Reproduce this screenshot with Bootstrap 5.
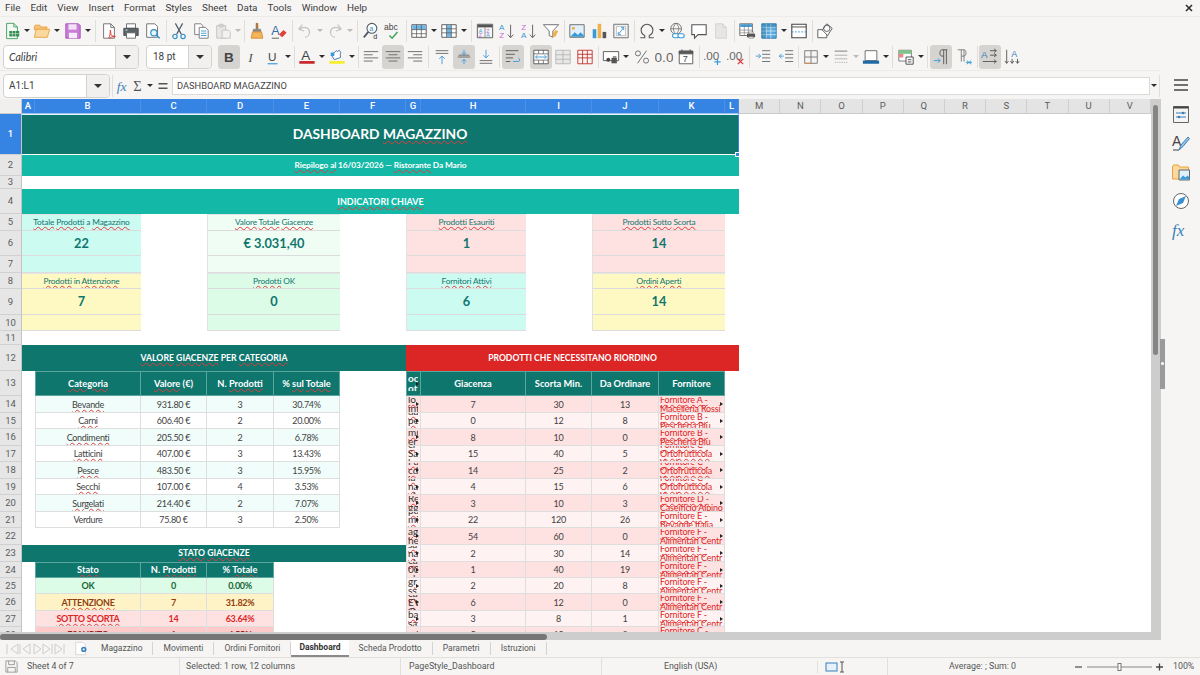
<!DOCTYPE html>
<html lang="en">
<head>
<meta charset="utf-8">
<title>Dashboard Magazzino</title>
<link href="https://cdn.jsdelivr.net/npm/bootstrap@5.3.0/dist/css/bootstrap.min.css" rel="stylesheet">
<style>
html,body{height:100%;overflow:hidden;margin:0}
body{background:#f6f5f4;font-family:"Roboto","Liberation Sans",sans-serif;font-size:10px;color:#3d3d3d}
.lo-app{width:1200px;height:675px}
.lo-menu{height:17px;padding-left:5px;gap:10px;font-size:9.9px;line-height:16px;color:#3d3d3d;border-bottom:1px solid #ecebe9}
.lo-close{margin-left:auto;margin-right:7px;display:flex;align-items:center}
.lo-tool{height:26px}
.lo-t1{padding-left:1px;margin-top:1px}
.lo-t2{padding-left:3px;height:27px}
.tb{width:22px;height:24px;display:flex;align-items:center;justify-content:center;flex:none;border-radius:3px}
.tb svg{width:18px;height:18px;display:block}
.tb.on{background:#d6d4d1}
.tb-fx{width:18px}.tb-sg{width:13px}
.cr{width:8px;height:24px;display:flex;align-items:center;justify-content:center;flex:none}
.cr::before{content:"";border-left:3px solid transparent;border-right:3px solid transparent;border-top:3px solid #2e2e2e}
.cr.dim::before{border-top-color:#b9b9b9}
.sp4,.sp5,.sp6,.sp3{flex:none;height:22px;position:relative}
.sp3{width:3px}.sp4{width:4px}.sp5{width:5px}.sp6{width:6px}
.sp3::after,.sp4::after,.sp5::after,.sp6::after{content:"";display:block;width:1px;height:22px;background:#e0dedb;margin:0 auto}
.g1{margin-left:1px}.g6{margin-left:6px}
.combo{height:24px;background:#fff;border:1px solid #d4d2cf;border-radius:4px;display:flex;align-items:stretch;flex:none;font-size:10px}
.combo>span{flex:1;padding-left:5px;line-height:22px;white-space:nowrap}
.combo>i{display:flex;width:23px;flex:none;align-items:center;justify-content:center;background:#f1f0ee;border-left:1px solid #d4d2cf;border-radius:0 4px 4px 0}
.combo>i::before{content:"";border-left:4px solid transparent;border-right:4px solid transparent;border-top:4px solid #333}
.cb-font{width:136px}.cb-font>span{font-family:"Lato",sans-serif;font-style:italic;font-size:10.5px}
.cb-size{width:66px;margin-left:7px;margin-right:6px}.cb-size>span{padding-left:6px}
.cb-name{width:107px}
.lo-fx{height:29px;padding:1px 0 0 3px;border-top:1px solid #ecebe9}
.fx-in{flex:1;height:18px;background:#fff;border:1px solid #dcdad7;font-size:9.3px;line-height:16px;padding-left:4px;color:#444;white-space:nowrap}
.sheet-wrap{height:533px}
.sheet-port{width:1151px;height:533px;overflow:hidden;background:#fff;flex:none}
.grid-t{width:1151px;table-layout:fixed;border-collapse:separate;border-spacing:0;font-family:"Lato","Liberation Sans",sans-serif;font-size:9px;letter-spacing:-.3px;color:#3f3f3f}
.grid-t td,.grid-t th{padding:0;overflow:hidden;text-align:center;white-space:nowrap;line-height:1}
.cw-rh{width:22px}.cw-a{width:13px}.cw-b{width:106px}.cw-c{width:66px}.cw-d{width:67px}.cw-e{width:66px}.cw-f{width:66px}.cw-g{width:15px}.cw-h{width:105px}.cw-i{width:66px}.cw-j{width:67px}.cw-k{width:66px}.cw-l{width:14px}.cw-x{width:41.2px}
.grid-t thead th{height:15px;background:#e4e4e4;color:#5c5c5c;font-family:"Roboto",sans-serif;font-size:9.5px;letter-spacing:0;font-weight:400;border-right:1px solid #cfcfcf;border-bottom:1px solid #c9c9c9}
.grid-t thead th.sel{background:#3584e4;color:#fff;font-weight:500;border-right-color:#4b90e4;border-bottom-color:#9cc2ef}
.grid-t thead th.corner{background:#f0efed;border-right-color:#c9c9c9}
.grid-t tbody th{background:#e6e6e6;color:#5c5c5c;font-family:"Roboto",sans-serif;font-size:9.5px;letter-spacing:0;font-weight:400;border-right:1px solid #c4c4c4;border-bottom:1px solid #d1d1d1}
.grid-t tbody th.sel{background:#3584e4;color:#fff;font-weight:500}
.h13{height:13px}.h14{height:14px}.h16{height:16px}.h17{height:17px}.h21{height:21px}.h25{height:25px}.h26{height:26px}.h41{height:41px}
.sq{text-decoration:underline wavy #df3b3b .8px;text-underline-offset:.5px}
.bt1{background:#0f766e;color:#fff;font-size:13.8px;letter-spacing:0;font-weight:700;position:relative;padding-bottom:2px!important;border-top:1px solid #e8f4ff;border-right:1px solid #3584e4;border-bottom:1.5px solid #fff;overflow:visible!important}
.handle{position:absolute;right:-2px;bottom:-3px;width:5px;height:5px;background:#3584e4;border:1px solid #fff}
.bt2{background:#14b8a6;color:#fff;font-weight:700;font-size:8.3px;letter-spacing:-.1px}
.bt4{background:#14b8a6;color:#fff;font-weight:700;font-size:9px;letter-spacing:0}
.bd{background:#0f766e;color:#fff;font-weight:700;font-size:8.7px;letter-spacing:0}
.br{background:#dc2626;color:#fff;font-weight:700;font-size:8.6px;letter-spacing:0}
.kl{color:#0f766e;font-size:8.3px;letter-spacing:-.18px;border-bottom:1px solid #dcdcdc;border-top:1px solid #e4e4e4}
.kv{color:#0f766e;font-size:12.8px;letter-spacing:0;font-weight:700;border-bottom:1px solid #dcdcdc}
.ke{border-bottom:1px solid #dcdcdc}
.kbl{border-left:1px solid #e2e2e2}
.kteal{background:#ccfbf1}.kgrn{background:#f0fdf4}.kred{background:#fee2e2}.kyel{background:#fef9c3}.kok{background:#dcfce7}
.th-t{background:#0f766e;color:#fff;font-weight:700;font-size:9.3px;letter-spacing:0;border-right:1px solid #5ba69f;border-bottom:1px solid #5ba69f;border-top:1px solid #5ba69f}
.th-l{border-left:1px solid #5ba69f}
.dc{border-right:1px solid #dedede;border-bottom:1px solid #dedede}
.dl{border-left:1px solid #dedede}
.ra{background:#f0fdfa}.rw{background:#fff}
.rr{background:#fee2e2}.rp{background:#fef2f2}
.st-ok{background:#dcfce7;color:#166534;font-weight:700}
.st-at{background:#fef3c7;color:#92400e;font-weight:700}
.st-so{background:#fee2e2;color:#dc2626;font-weight:700}
.st-es{background:#fecaca;color:#991b1b;font-weight:700}
.clipc{height:15px;overflow:hidden;display:flex;flex-direction:column;justify-content:center;text-align:left;line-height:9px;position:relative}
.clipc>span{display:block;white-space:nowrap}
.gc{font-size:10px;letter-spacing:0;color:#333;padding-left:1px;width:11px}
.th-gc{color:#fff;font-size:10px;text-align:left;padding-left:1px;width:11px;line-height:9.500px}
.kc{color:#dc2626;font-size:8.9px;letter-spacing:-.12px;padding-left:1px;padding-right:3px}
.ov{position:relative}
.ov::after{content:"";position:absolute;right:1px;top:50%;margin-top:-2px;border-top:2px solid transparent;border-bottom:2px solid transparent;border-left:3px solid #222}
.vbar{width:10px;flex:none;background:#cdcdcd}
.vthumb{margin:6px 0 0 2px;width:5px;height:250px;background:#858585;border-radius:3px}
.hbar{height:8px;background:#cdcdcd;width:1161px}
.hthumb{width:547px;height:6px;background:#767676;border-radius:3px;margin-top:2px}
.tabs{height:17px;font-size:8.5px;color:#555;width:1161px}
.tab-nav{width:72px;padding-left:6px}
.tab-nav svg{width:60px;height:14px;display:block}
.tab-new{width:19px;padding-left:2px}
.tab-i{padding:0 10px;border-right:1px solid #d5d3d0;height:13px;display:flex;align-items:center;white-space:nowrap}
.tab-i.act{background:#fff;color:#333;font-weight:700;height:17px;border-right:0;border-bottom:2px solid #8a8a8a;padding:0 8px}
.lo-side{width:39px;flex:none;padding-top:4px;gap:7px;align-items:center;position:relative}
.lo-side svg{width:20px;height:22px;display:block}
.grip{position:absolute;left:-1px;top:269px;width:5px;height:50px;background:#9a9a9a}
.grip::after{content:"";position:absolute;left:1px;top:23px;width:3px;height:3px;background:#fff;border-radius:50%}
.lo-status{height:18px;font-size:8.8px;color:#555;border-top:1px solid #e2e0dd}
.s-doc{width:27px;padding-left:4px}
.s-sheet{width:152px}
.s-sel{width:221px;padding-left:6px;border-left:1px solid #e2e0dd}
.s-pg{width:201px;padding-left:8px;border-left:1px solid #e2e0dd}
.s-lang{width:216px;padding-left:62px;border-left:1px solid #e2e0dd}
.s-mode{width:70px;padding-left:7px;border-left:1px solid #e2e0dd}
.s-sum{width:184px;padding-left:61px;border-left:1px solid #e2e0dd}
.zm{width:102px}
.zm svg{display:block}
.s-txt{line-height:17px;white-space:nowrap}
</style>
</head>
<body>
<div class="lo-app d-flex flex-column">

<div class="lo-menu d-flex">
<span>File</span><span>Edit</span><span>View</span><span>Insert</span><span>Format</span><span>Styles</span><span>Sheet</span><span>Data</span><span>Tools</span><span>Window</span><span>Help</span>
<span class="lo-close"><svg viewBox="0 0 8 8" width="8" height="8" fill="none" stroke="#2e2e2e" stroke-width="1.600"><path d="M1 1l6 6M7 1L1 7"/></svg></span>
</div>

<div class="lo-tool lo-t1 d-flex align-items-center">
<span class="tb"><svg viewBox="0 0 20 20"><path d="M4 1.500h8l4 4v13H4z" fill="#f2faf4" stroke="#3f9c5e"/><path d="M12 1.500v4h4" fill="none" stroke="#3f9c5e"/><path d="M7 10h11v6H7z" fill="#2f8c4e"/><path d="M10.500 10v6M14 10v6M7 13h11" stroke="#d5efdc" stroke-width=".7"/></svg></span><span class="cr"></span>
<span class="tb"><svg viewBox="0 0 20 20"><path d="M1.500 5.500l1-2h5l1 2h7v3H1.500z" fill="#f4c27a" stroke="#e8a33d"/><path d="M1.500 17l2-9h15l-2.500 9z" fill="#fbd89d" stroke="#e8a33d"/></svg></span><span class="cr"></span>
<span class="tb g1"><svg viewBox="0 0 20 20"><path d="M2 2h14l2 2v14H2z" fill="#c97fd6" stroke="#a450b5"/><path d="M5 2.500h9v6H5z" fill="#f4e3f7"/><path d="M5.500 12h9v6h-9z" fill="#f7ecf9"/></svg></span><span class="cr"></span>
<span class="sp6"></span>
<span class="tb"><svg viewBox="0 0 20 20"><path d="M4 2h8l4 4v12H4z" fill="#fff" stroke="#6a6a6a"/><path d="M12 2v4h4" fill="none" stroke="#6a6a6a"/><path d="M10 17c2-3 1-8 1.500-8s0 5 1.500 6 3 .5 4 1-4 0-5 1-2 2-2 0z" fill="none" stroke="#d9302f"/></svg></span>
<span class="tb"><svg viewBox="0 0 20 20"><path d="M5 2h10v5H5z" fill="#fff" stroke="#666"/><path d="M2 7h16v8H2z" fill="#5b6366" stroke="#4a5053"/><path d="M5 12h10v6H5z" fill="#fff" stroke="#666"/><path d="M4 9h2" stroke="#fff"/></svg></span>
<span class="tb"><svg viewBox="0 0 20 20"><path d="M3 2h9l3 3v12H3z" fill="#fff" stroke="#6a6a6a"/><circle cx="11" cy="12" r="3.500" fill="#e8f4fb" stroke="#2f8fc4" stroke-width="1.300"/><path d="M13.500 14.500l4 3.500" stroke="#2f8fc4" stroke-width="1.600"/></svg></span>
<span class="sp4"></span>
<span class="tb"><svg viewBox="0 0 20 20"><path d="M6 1.500l6.500 12M14 1.500L7.500 13.500" stroke="#4d5a66" stroke-width="1.300" fill="none"/><circle cx="5.500" cy="16" r="2.400" fill="none" stroke="#2f8fc4" stroke-width="1.300"/><circle cx="14.500" cy="16" r="2.400" fill="none" stroke="#2f8fc4" stroke-width="1.300"/></svg></span>
<span class="tb"><svg viewBox="0 0 20 20"><path d="M3 2h7l2 2v10H3z" fill="#fff" stroke="#777"/><path d="M8 6h7l3 3v9H8z" fill="#fff" stroke="#777"/><path d="M10 10h6M10 12.500h6M10 15h6" stroke="#3a9ad9"/></svg></span>
<span class="tb"><svg viewBox="0 0 20 20" opacity=".55"><path d="M3 4h10v14H3z" fill="#ddd" stroke="#999"/><path d="M6 2.500h4v3H6z" fill="#bbb" stroke="#999"/><path d="M9 9h7l2 2v7H9z" fill="#eee" stroke="#999"/></svg></span><span class="cr dim"></span>
<span class="sp4"></span>
<span class="tb"><svg viewBox="0 0 20 20"><path d="M9 1.500h2v6H9z" fill="#b07a3c" stroke="#8f5f28" stroke-width=".6"/><path d="M6 8h8l.5 2.500h-9z" fill="#888" stroke="#666" stroke-width=".5"/><path d="M5 11h10l1.500 7h-13z" fill="#f3b45c" stroke="#d38c2d"/></svg></span>
<span class="tb"><svg viewBox="0 0 20 20"><text x="1.500" y="14" font-family="Liberation Sans" font-size="14" fill="#3a6ea5">A</text><path d="M10 14l5-5 3.500 3-5 5z" fill="#e0403a"/><path d="M2 18h8" stroke="#555" stroke-width="1"/></svg></span>
<span class="sp4"></span>
<span class="tb"><svg viewBox="0 0 20 20" fill="none" stroke="#c4c4c4" stroke-width="1.400"><path d="M3 8l4-5M3 8l6 2"/><path d="M3.500 8c4-3 11-3 11.500 3 .3 3-2 5.500-5 6"/></svg></span><span class="cr dim"></span>
<span class="tb"><svg viewBox="0 0 20 20" fill="none" stroke="#c4c4c4" stroke-width="1.400"><path d="M17 8l-4-5M17 8l-6 2"/><path d="M16.500 8c-4-3-11-3-11.500 3-.3 3 2 5.500 5 6"/></svg></span><span class="cr dim"></span>
<span class="sp6"></span>
<span class="tb"><svg viewBox="0 0 20 20"><circle cx="11" cy="7" r="5.500" fill="#fff" stroke="#4d5a66" stroke-width="1.200"/><text x="8.300" y="9.500" font-family="Liberation Sans" font-size="7.500" fill="#2f8fc4">a</text><path d="M7 11l-5 6" stroke="#4d5a66" stroke-width="2"/><text x="12.500" y="18.500" font-family="Liberation Sans" font-size="8" fill="#333">d</text></svg></span>
<span class="tb"><svg viewBox="0 0 20 20"><text x="0" y="9" font-family="Liberation Sans" font-size="9.500" fill="#444">abc</text><path d="M6 15l3 3 6-7" fill="none" stroke="#3fa55b" stroke-width="1.700"/></svg></span>
<span class="sp4"></span>
<span class="tb"><svg viewBox="0 0 20 20"><path d="M2 3h16v14H2z" fill="#fff" stroke="#555"/><path d="M2.500 3.500h15v5h-15z" fill="#6fb6e6"/><path d="M2 8.500h16M2 13h16M7.300 3v14M12.600 3v14" stroke="#555" stroke-width=".8"/></svg></span><span class="cr"></span>
<span class="tb"><svg viewBox="0 0 20 20"><path d="M2 3h16v14H2z" fill="#fff" stroke="#555"/><path d="M7.300 3.500h5.300v13H7.300z" fill="#6fb6e6"/><path d="M2 7.500h16M2 12h16M7.300 3v14M12.600 3v14" stroke="#555" stroke-width=".8"/></svg></span><span class="cr"></span>
<span class="sp6"></span>
<span class="tb"><svg viewBox="0 0 20 20"><path d="M1.500 2.500h17v15h-17z" fill="#f5f5f5" stroke="#555"/><path d="M2 3h16v3H2z" fill="#555"/><path d="M10 6v11" stroke="#555" stroke-width=".7"/><text x="3" y="12" font-family="Liberation Sans" font-size="6" fill="#3a9ad9">A</text><text x="3" y="17" font-family="Liberation Sans" font-size="6" fill="#c96dd6">Z</text><text x="11.500" y="12" font-family="Liberation Sans" font-size="6" fill="#c96dd6">Z</text><text x="11.500" y="17" font-family="Liberation Sans" font-size="6" fill="#3a9ad9">A</text></svg></span>
<span class="tb"><svg viewBox="0 0 20 20"><text x="1" y="9" font-family="Liberation Sans" font-size="9" fill="#3a9ad9">A</text><text x="1.500" y="18" font-family="Liberation Sans" font-size="9" fill="#c96dd6">Z</text><path d="M14 3v14M11 14l3 3.500 3-3.500" fill="none" stroke="#666" stroke-width="1.100"/></svg></span>
<span class="tb"><svg viewBox="0 0 20 20"><text x="1.500" y="9" font-family="Liberation Sans" font-size="9" fill="#c96dd6">Z</text><text x="1" y="18" font-family="Liberation Sans" font-size="9" fill="#3a9ad9">A</text><path d="M14 3v14M11 14l3 3.500 3-3.500" fill="none" stroke="#666" stroke-width="1.100"/></svg></span>
<span class="tb"><svg viewBox="0 0 20 20"><path d="M1.500 3h17l-6.500 7v7l-4-2v-5z" fill="#fff" stroke="#666"/><path d="M12 13l3-4 3 1-3 6-3 1z" fill="#f2b04c"/></svg></span>
<span class="sp4"></span>
<span class="tb"><svg viewBox="0 0 20 20"><path d="M2 3h16v14H2z" fill="#dff0fb" stroke="#666"/><circle cx="6" cy="7" r="1.700" fill="#f2b04c"/><path d="M2.500 16.500l5-5 3.500 3 3-3 4 4v1z" fill="#3a9ad9"/></svg></span>
<span class="tb"><svg viewBox="0 0 20 20"><path d="M3 8h4v10H3z" fill="#3a9ad9"/><path d="M8.500 2h4v16h-4z" fill="#f2b04c"/><path d="M14 11h4v7h-4z" fill="#555"/></svg></span>
<span class="tb"><svg viewBox="0 0 20 20"><path d="M2 2.500h16v15H2z" fill="#f1f1f1" stroke="#666"/><path d="M5 5h10v10H5z" fill="#fff" stroke="#aaa" stroke-width=".7"/><path d="M7 14l6-8M10 6h3v3M7 11v3h3" fill="none" stroke="#3a9ad9"/></svg></span>
<span class="sp4"></span>
<span class="tb"><svg viewBox="0 0 20 20"><path d="M2.500 17.500h5v-2.500c-2.500-1-4-3-4-6 0-3.500 3-6.500 6.500-6.500s6.500 3 6.500 6.500c0 3-1.500 5-4 6v2.500h5" fill="none" stroke="#555" stroke-width="1.200"/></svg></span><span class="cr"></span>
<span class="tb"><svg viewBox="0 0 20 20" fill="none"><circle cx="9" cy="7.500" r="6" stroke="#666"/><path d="M3 7.500h12M9 1.500c-4 4-4 8 0 12M9 1.500c4 4 4 8 0 12" stroke="#666" stroke-width=".8"/><rect x="5" y="13" width="7" height="4.500" rx="2.200" fill="#fff" stroke="#3a9ad9" stroke-width="1.200"/><rect x="11" y="13" width="7" height="4.500" rx="2.200" fill="#fff" stroke="#3a9ad9" stroke-width="1.200"/></svg></span>
<span class="tb"><svg viewBox="0 0 20 20"><path d="M2 3h16v11H9l-4 4v-4H2z" fill="#fff" stroke="#555" stroke-width="1.200"/></svg></span>
<span class="tb"><svg viewBox="0 0 20 20" opacity=".45"><path d="M4 2h8l4 4v12H4z" fill="#d5d5d5" stroke="#aaa"/><path d="M12 2v4h4" fill="none" stroke="#aaa"/></svg></span>
<span class="sp4"></span>
<span class="tb"><svg viewBox="0 0 20 20"><path d="M2 2h14v13H2z" fill="#fff" stroke="#666"/><path d="M2.500 2.500h13v3h-13z" fill="#3a9ad9"/><path d="M2 9h14M2 12h14M7 2v13M11.500 2v13" stroke="#777" stroke-width=".7"/><path d="M10 13h9v4h-9z" fill="#555"/><path d="M12 11h5v2h-5zM12 16h5v2h-5z" fill="#eee" stroke="#555" stroke-width=".5"/></svg></span>
<span class="tb"><svg viewBox="0 0 20 20"><path d="M2 2h16v16H2z" fill="#5aa9dc" stroke="#2978ad"/><path d="M2 6h16M2 10h16M2 14h16M7 2v16M12 2v16" stroke="#d8effb" stroke-width=".8"/><path d="M2 2h5v16H2zM2 2h16v4H2z" fill="#2f6c8f" opacity=".35"/></svg></span><span class="cr"></span>
<span class="tb"><svg viewBox="0 0 20 20"><path d="M2 2.500h16v15H2z" fill="#fff" stroke="#444" stroke-width="1.200"/><path d="M2 5.500h16" stroke="#444"/><path d="M2 11h16" stroke="#3a9ad9" stroke-dasharray="2 1.500"/></svg></span>
<span class="sp4"></span>
<span class="tb"><svg viewBox="0 0 20 20" fill="none" stroke="#555"><path d="M2 8.500h10v9H2z" fill="#fff"/><path d="M12 2l6 5-5 8-6-6z" fill="#fff"/><circle cx="12" cy="7" r="3.500"/></svg></span>
</div>

<div class="lo-tool lo-t2 d-flex align-items-center">
<div class="combo cb-font"><span>Calibri</span><i></i></div>
<div class="combo cb-size"><span>18 pt</span><i></i></div>
<span class="tb on"><svg viewBox="0 0 20 20"><text x="4.500" y="15.500" font-family="Liberation Sans" font-weight="700" font-size="15" fill="#444">B</text></svg></span>
<span class="tb"><svg viewBox="0 0 20 20"><text x="7" y="15.500" font-family="Liberation Serif" font-style="italic" font-size="15" fill="#555">I</text></svg></span>
<span class="tb"><svg viewBox="0 0 20 20"><text x="4.500" y="14" font-family="Liberation Sans" font-size="13" fill="#444">U</text><path d="M4 17.500h11" stroke="#3a9ad9" stroke-width="1.300"/></svg></span><span class="cr"></span>
<span class="sp4"></span>
<span class="tb"><svg viewBox="0 0 20 20"><text x="3.500" y="13.500" font-family="Liberation Sans" font-size="15" fill="#444">A</text><path d="M1.500 14.500h17v3h-17z" fill="#c9252a"/></svg></span><span class="cr"></span>
<span class="tb"><svg viewBox="0 0 20 20"><path d="M1.500 14.500h17v3h-17z" fill="#f6ee2b"/><path d="M7 13l-3-5 5-5 1.500 1 2-1.500 2 3-1 1 .5 4z" fill="#fff" stroke="#3a6ea5"/><path d="M3 5h4v4H3z" fill="#3a9ad9"/></svg></span><span class="cr"></span>
<span class="sp4"></span>
<span class="tb"><svg viewBox="0 0 20 20" stroke="#666"><path d="M2 4h16M2 7.500h10M2 11h16M2 14.500h10"/></svg></span>
<span class="tb on"><svg viewBox="0 0 20 20" stroke="#666"><path d="M2 4h16M5 7.500h10M2 11h16M5 14.500h10"/></svg></span>
<span class="tb"><svg viewBox="0 0 20 20" stroke="#666"><path d="M2 4h16M8 7.500h10M2 11h16M8 14.500h10"/></svg></span>
<span class="sp5"></span>
<span class="tb"><svg viewBox="0 0 20 20" fill="none"><path d="M3 3h14M3 6h14" stroke="#666"/><path d="M10 18V9M7 12l3-3 3 3" stroke="#3a9ad9"/></svg></span>
<span class="tb on"><svg viewBox="0 0 20 20" fill="none"><path d="M3 10h14" stroke="#666"/><path d="M10 2v5M7.500 5L10 7.500 12.500 5M10 18v-5M7.500 15l2.500-2.500 2.500 2.500" stroke="#3a9ad9"/><path d="M4 8h12" stroke="#666"/></svg></span>
<span class="tb"><svg viewBox="0 0 20 20" fill="none"><path d="M3 14h14M3 17h14" stroke="#666"/><path d="M10 2v9M7 8l3 3 3-3" stroke="#3a9ad9"/></svg></span>
<span class="sp5"></span>
<span class="tb on"><svg viewBox="0 0 20 20" fill="none" stroke="#555"><path d="M2 3h14M2 7h10M2 11h8"/><path d="M10 15h6c2 0 2-3 0-4" stroke="#3a9ad9"/><path d="M2 15h5"/></svg></span>
<span class="tb on g6"><svg viewBox="0 0 20 20"><path d="M2 2.500h16v15H2z" fill="#fff" stroke="#555"/><path d="M2 6.500h16M2 13.500h16M7.300 2.500v4M12.600 2.500v4M7.300 13.500v4M12.600 13.500v4" stroke="#555" stroke-width=".8"/><path d="M4 10h12M4 10l2-2M4 10l2 2M16 10l-2-2M16 10l-2 2" fill="none" stroke="#3a9ad9"/></svg></span>
<span class="tb"><svg viewBox="0 0 20 20" opacity=".5"><path d="M2 2.500h16v15H2z" fill="#ddd" stroke="#777"/><path d="M2 7.500h16M2 12.500h16M10 2.500v15" stroke="#777"/></svg></span>
<span class="tb"><svg viewBox="0 0 20 20" fill="none" stroke="#c4332f"><path d="M2 2.500h16v15H2zM2 7h16M2 11h16M7.300 2.500v15M12.600 2.500v15"/></svg></span>
<span class="sp4"></span>
<span class="tb"><svg viewBox="0 0 20 20"><path d="M1.500 4h17v10h-17z" fill="#fff" stroke="#555"/><circle cx="7" cy="13" r="2.200" fill="#444"/><path d="M10.500 11h6v6h-6z" fill="#555"/><path d="M12 9h4v2h-4z" fill="#888"/></svg></span><span class="cr"></span>
<span class="tb g1"><svg viewBox="0 0 20 20" fill="none" stroke="#666"><circle cx="5.500" cy="6" r="2.800"/><circle cx="14.500" cy="14" r="2.800"/><path d="M15 3L5 17"/></svg></span>
<span class="tb"><svg viewBox="0 0 20 20"><text x="-.5" y="15.500" font-family="Liberation Sans" font-size="15" textLength="21" lengthAdjust="spacingAndGlyphs" fill="#666">0.0</text></svg></span>
<span class="tb"><svg viewBox="0 0 20 20"><path d="M2.500 3.500h15v14h-15z" fill="#fff" stroke="#555"/><path d="M2.500 3.500h15v3h-15zM5.500 1.500v3M14.500 1.500v3" fill="#555" stroke="#555"/><text x="6.500" y="15.500" font-family="Liberation Sans" font-size="10" fill="#444">7</text></svg></span>
<span class="sp5"></span>
<span class="tb"><svg viewBox="0 0 20 20"><text x="-1" y="13" font-family="Liberation Sans" font-size="13" fill="#666">.00</text><path d="M15 12v7M11.500 15.500h7" stroke="#3a9ad9" stroke-width="1.300"/></svg></span>
<span class="tb g1"><svg viewBox="0 0 20 20"><text x="-1" y="13" font-family="Liberation Sans" font-size="13" fill="#666">.00</text><path d="M12 12l6 6M18 12l-6 6" stroke="#d9302f" stroke-width="1.300"/></svg></span>
<span class="sp5"></span>
<span class="tb"><svg viewBox="0 0 20 20" fill="none"><path d="M9 3h9M9 7h9M9 11h9M9 15h9" stroke="#666"/><path d="M2 9h5M5 6.500L7.500 9 5 11.500" stroke="#3a9ad9"/></svg></span>
<span class="tb g1"><svg viewBox="0 0 20 20" fill="none"><path d="M9 3h9M9 7h9M9 11h9M9 15h9" stroke="#666"/><path d="M7.500 9h-5M5 6.500L2.500 9 5 11.500" stroke="#3a9ad9"/></svg></span>
<span class="sp3"></span>
<span class="tb"><svg viewBox="0 0 20 20" fill="none"><path d="M3 3h14v14H3zM10 3v14M3 10h14" stroke="#777"/><path d="M3 17h7" stroke="#e08a3c"/></svg></span><span class="cr"></span>
<span class="tb"><svg viewBox="0 0 20 20" opacity=".6"><path d="M3 3.500h14" stroke="#666" stroke-width="1.500"/><path d="M3 8h14" stroke="#777" stroke-width="1"/><path d="M3 12h14" stroke="#888"/><path d="M3 16h14" stroke="#888" stroke-dasharray="1.500 1"/></svg></span><span class="cr dim"></span>
<span class="tb"><svg viewBox="0 0 20 20"><path d="M3.500 3h13v11h-13z" fill="#fff" stroke="#666"/><path d="M1 14h18v3.500H1z" fill="#1d6aa5"/></svg></span><span class="cr"></span>
<span class="sp5"></span>
<span class="tb"><svg viewBox="0 0 20 20"><path d="M2 2.500h14v12H2z" fill="#fff" stroke="#777"/><path d="M2 2.500h14v4H2z" fill="#7ec58b"/><path d="M2 6.500h5v4H2z" fill="#e88"/><path d="M10 10h8v8h-8z" fill="#fff" stroke="#444"/><path d="M12 13h4M12 15.500h4" stroke="#444"/></svg></span><span class="cr"></span>
<span class="sp5"></span>
<span class="tb on"><svg viewBox="0 0 20 20" fill="none" stroke="#555"><path d="M17 2h-6c-3 0-3 7 0 7h2M13 2v16M16 2v16"/><path d="M2 14h7M6.500 11.500L9 14l-2.500 2.500" stroke="#3a9ad9"/></svg></span>
<span class="tb g1"><svg viewBox="0 0 20 20" fill="none" stroke="#777"><path d="M3 2h7c3 0 3 7 0 7H7M7 2v13M10 2v13"/><path d="M13 14l5 4M18 14l-5 4M12 16h7" stroke="#3a9ad9"/></svg></span>
<span class="sp4"></span>
<span class="tb on"><svg viewBox="0 0 20 20"><text x="0" y="11" font-family="Liberation Sans" font-size="11" fill="#3a7fb8">A</text><path d="M10 3h7M14.500 1l2.500 2-2.500 2M10 8h7M14.500 6l2.500 2-2.500 2M2 15h15M14.500 13l2.500 2-2.500 2" fill="none" stroke="#555"/></svg></span>
<span class="tb g1"><svg viewBox="0 0 20 20"><text x="8" y="10" font-family="Liberation Sans" font-size="10" fill="#3a7fb8">A</text><path d="M3 2v15M1 14.500L3 17l2-2.500M9 12v5M7 14.500L9 17l2-2.500M15 12v5M13 14.500L15 17l2-2.500" fill="none" stroke="#555"/></svg></span>
</div>

<div class="d-flex flex-grow-1">
<div class="d-flex flex-column">

<div class="lo-fx d-flex align-items-center">
<div class="combo cb-name"><span>A1:L1</span><i></i></div>
<span class="sp5"></span>
<span class="tb tb-fx"><svg viewBox="0 0 20 20"><text x="2" y="15" font-family="Liberation Serif" font-style="italic" font-size="15" fill="#3a7fb8">fx</text></svg></span>
<span class="tb tb-sg"><svg viewBox="0 0 14 20"><text x="0" y="16" font-family="Liberation Serif" font-size="16" fill="#555">Σ</text></svg></span><span class="cr"></span>
<span class="tb tb-fx"><svg viewBox="0 0 20 20"><path d="M5 7.500h10M5 12.500h10" stroke="#555" stroke-width="1.600"/></svg></span>
<div class="fx-in">DASHBOARD MAGAZZINO</div>
<span class="cr"></span><span class="sp3"></span>
</div>

<div class="sheet-wrap d-flex">
<div class="sheet-port">
<table class="grid-t">
<colgroup><col class="cw-rh"><col class="cw-a"><col class="cw-b"><col class="cw-c"><col class="cw-d"><col class="cw-e"><col class="cw-f"><col class="cw-g"><col class="cw-h"><col class="cw-i"><col class="cw-j"><col class="cw-k"><col class="cw-l"><col class="cw-x"><col class="cw-x"><col class="cw-x"><col class="cw-x"><col class="cw-x"><col class="cw-x"><col class="cw-x"><col class="cw-x"><col class="cw-x"><col class="cw-x"></colgroup>
<thead><tr><th class="corner"></th><th class="sel">A</th><th class="sel">B</th><th class="sel">C</th><th class="sel">D</th><th class="sel">E</th><th class="sel">F</th><th class="sel">G</th><th class="sel">H</th><th class="sel">I</th><th class="sel">J</th><th class="sel">K</th><th class="sel">L</th><th>M</th><th>N</th><th>O</th><th>P</th><th>Q</th><th>R</th><th>S</th><th>T</th><th>U</th><th>V</th></tr></thead>
<tbody>
<tr class="h41"><th class="sel">1</th><td colspan="12" class="bt1">DASHBOARD <span class="sq">MAGAZZINO</span><span class="handle"></span></td><td colspan="10"></td></tr>
<tr class="h21"><th>2</th><td colspan="12" class="bt2"><span class="sq">Riepilogo</span> <span class="sq">al</span> 16/03/2026 — <span class="sq">Ristorante</span> Da Mario</td><td colspan="10"></td></tr>
<tr class="h13"><th>3</th><td colspan="22"></td></tr>
<tr class="h25"><th>4</th><td colspan="12" class="bt4"><span class="sq">INDICATORI</span> <span class="sq">CHIAVE</span></td><td colspan="10"></td></tr>
<tr class="h17"><th>5</th><td colspan="2" class="kl kteal"><span class="sq">Totale</span> <span class="sq">Prodotti</span> a <span class="sq">Magazzino</span></td><td></td><td colspan="2" class="kl kgrn kbl"><span class="sq">Valore</span> <span class="sq">Totale</span> <span class="sq">Giacenze</span></td><td></td><td colspan="2" class="kl kred kbl"><span class="sq">Prodotti</span> <span class="sq">Esauriti</span></td><td></td><td colspan="2" class="kl kred kbl"><span class="sq">Prodotti</span> <span class="sq">Sotto</span> <span class="sq">Scorta</span></td><td></td><td colspan="10"></td></tr>
<tr class="h25"><th>6</th><td colspan="2" class="kv kteal">22</td><td></td><td colspan="2" class="kv kgrn kbl">€ 3.031,40</td><td></td><td colspan="2" class="kv kred kbl">1</td><td></td><td colspan="2" class="kv kred kbl">14</td><td></td><td colspan="10"></td></tr>
<tr class="h17"><th>7</th><td colspan="2" class="ke kteal"></td><td></td><td colspan="2" class="ke kgrn kbl"></td><td></td><td colspan="2" class="ke kred kbl"></td><td></td><td colspan="2" class="ke kred kbl"></td><td></td><td colspan="10"></td></tr>
<tr class="h16"><th>8</th><td colspan="2" class="kl kyel"><span class="sq">Prodotti</span> in <span class="sq">Attenzione</span></td><td></td><td colspan="2" class="kl kok kbl"><span class="sq">Prodotti</span> OK</td><td></td><td colspan="2" class="kl kteal kbl"><span class="sq">Fornitori</span> <span class="sq">Attivi</span></td><td></td><td colspan="2" class="kl kyel kbl"><span class="sq">Ordini</span> <span class="sq">Aperti</span></td><td></td><td colspan="10"></td></tr>
<tr class="h26"><th>9</th><td colspan="2" class="kv kyel">7</td><td></td><td colspan="2" class="kv kok kbl">0</td><td></td><td colspan="2" class="kv kteal kbl">6</td><td></td><td colspan="2" class="kv kyel kbl">14</td><td></td><td colspan="10"></td></tr>
<tr class="h16"><th>10</th><td colspan="2" class="ke kyel"></td><td></td><td colspan="2" class="ke kok kbl"></td><td></td><td colspan="2" class="ke kteal kbl"></td><td></td><td colspan="2" class="ke kyel kbl"></td><td></td><td colspan="10"></td></tr>
<tr class="h14"><th>11</th><td colspan="22"></td></tr>
<tr class="h26"><th>12</th><td colspan="6" class="bd"><span class="sq">VALORE</span> <span class="sq">GIACENZE</span> PER <span class="sq">CATEGORIA</span></td><td colspan="6" class="br">PRODOTTI CHE NECESSITANO RIORDINO</td><td colspan="10"></td></tr>
<tr class="h25"><th>13</th><td></td><td class="th-t th-l"><span class="sq">Categoria</span></td><td class="th-t"><span class="sq">Valore</span> (€)</td><td class="th-t">N. <span class="sq">Prodotti</span></td><td class="th-t">% <span class="sq">sul</span> <span class="sq">Totale</span></td><td></td><td class="th-t th-l ov"><div class="th-gc clipc"><span>oc</span><span>ot</span></div></td><td class="th-t">Giacenza</td><td class="th-t">Scorta Min.</td><td class="th-t">Da Ordinare</td><td class="th-t">Fornitore</td><td></td><td colspan="10"></td></tr>
<tr class="h17"><th>14</th><td></td><td class="dc dl ra"><span class="sq">Bevande</span></td><td class="dc ra">931.80 €</td><td class="dc ra">3</td><td class="dc ra">30.74%</td><td></td><td class="dc dl rr ov"><div class="clipc gc"><span class="sq">lo</span><span class="sq">int</span></div></td><td class="dc rr">7</td><td class="dc rr">30</td><td class="dc rr">13</td><td class="dc rr ov"><div class="clipc kc"><span class="sq">Fornitore A -</span><span class="sq">Macelleria Rossi</span></div></td><td></td><td colspan="10"></td></tr>
<tr class="h16"><th>15</th><td></td><td class="dc dl rw"><span class="sq">Carni</span></td><td class="dc rw">606.40 €</td><td class="dc rw">2</td><td class="dc rw">20.00%</td><td></td><td class="dc dl rp ov"><div class="clipc gc"><span class="sq">da</span><span class="sq">pe</span><span class="sq">ne</span></div></td><td class="dc rp">0</td><td class="dc rp">12</td><td class="dc rp">8</td><td class="dc rp ov"><div class="clipc kc"><span class="sq">Fornitore B -</span><span class="sq">Pescheria Blu</span></div></td><td></td><td colspan="10"></td></tr>
<tr class="h17"><th>16</th><td></td><td class="dc dl ra"><span class="sq">Condimenti</span></td><td class="dc ra">205.50 €</td><td class="dc ra">2</td><td class="dc ra">6.78%</td><td></td><td class="dc dl rr ov"><div class="clipc gc"><span class="sq">mi</span><span class="sq">er</span></div></td><td class="dc rr">8</td><td class="dc rr">10</td><td class="dc rr">0</td><td class="dc rr ov"><div class="clipc kc"><span class="sq">Fornitore B -</span><span class="sq">Pescheria Blu</span></div></td><td></td><td colspan="10"></td></tr>
<tr class="h16"><th>17</th><td></td><td class="dc dl rw"><span class="sq">Latticini</span></td><td class="dc rw">407.00 €</td><td class="dc rw">3</td><td class="dc rw">13.43%</td><td></td><td class="dc dl rp ov"><div class="clipc gc"><span class="sq">ci</span><span>Sa</span><span class="sq">la</span></div></td><td class="dc rp">15</td><td class="dc rp">40</td><td class="dc rp">5</td><td class="dc rp ov"><div class="clipc kc"><span class="sq">Fornitore C -</span><span class="sq">Ortofrutticola</span><span class="sq">Verdi</span></div></td><td></td><td colspan="10"></td></tr>
<tr class="h17"><th>18</th><td></td><td class="dc dl ra"><span class="sq">Pesce</span></td><td class="dc ra">483.50 €</td><td class="dc ra">3</td><td class="dc ra">15.95%</td><td></td><td class="dc dl rr ov"><div class="clipc gc"><span class="sq">Fu</span><span class="sq">cd</span><span class="sq">ia</span></div></td><td class="dc rr">14</td><td class="dc rr">25</td><td class="dc rr">2</td><td class="dc rr ov"><div class="clipc kc"><span class="sq">Fornitore C -</span><span class="sq">Ortofrutticola</span><span class="sq">Verdi</span></div></td><td></td><td colspan="10"></td></tr>
<tr class="h16"><th>19</th><td></td><td class="dc dl rw"><span class="sq">Secchi</span></td><td class="dc rw">107.00 €</td><td class="dc rw">4</td><td class="dc rw">3.53%</td><td></td><td class="dc dl rp ov"><div class="clipc gc"><span class="sq">ia</span><span class="sq">na</span><span class="sq">al</span></div></td><td class="dc rp">4</td><td class="dc rp">15</td><td class="dc rp">6</td><td class="dc rp ov"><div class="clipc kc"><span class="sq">Fornitore C -</span><span class="sq">Ortofrutticola</span><span class="sq">Verdi</span></div></td><td></td><td colspan="10"></td></tr>
<tr class="h17"><th>20</th><td></td><td class="dc dl ra"><span class="sq">Surgelati</span></td><td class="dc ra">214.40 €</td><td class="dc ra">2</td><td class="dc ra">7.07%</td><td></td><td class="dc dl rr ov"><div class="clipc gc"><span class="sq">Re</span><span class="sq">gg</span></div></td><td class="dc rr">3</td><td class="dc rr">10</td><td class="dc rr">3</td><td class="dc rr ov"><div class="clipc kc"><span class="sq">Fornitore D -</span><span class="sq">Caseificio Alpino</span></div></td><td></td><td colspan="10"></td></tr>
<tr class="h16"><th>21</th><td></td><td class="dc dl rw">Verdure</td><td class="dc rw">75.80 €</td><td class="dc rw">3</td><td class="dc rw">2.50%</td><td></td><td class="dc dl rp ov"><div class="clipc gc"><span class="sq">pu</span><span class="sq">mi</span><span class="sq">ra</span></div></td><td class="dc rp">22</td><td class="dc rp">120</td><td class="dc rp">26</td><td class="dc rp ov"><div class="clipc kc"><span class="sq">Fornitore E -</span><span class="sq">Bevande Italia</span></div></td><td></td><td colspan="10"></td></tr>
<tr class="h17"><th>22</th><td colspan="6"></td><td class="dc dl rr ov"><div class="clipc gc"><span class="sq">ag</span><span class="sq">he</span></div></td><td class="dc rr">54</td><td class="dc rr">60</td><td class="dc rr">0</td><td class="dc rr ov"><div class="clipc kc"><span class="sq">Fornitore F -</span><span class="sq">Alimentari Centr</span></div></td><td></td><td colspan="10"></td></tr>
<tr class="h17"><th>23</th><td colspan="6" class="bd"><span class="sq">STATO</span> <span class="sq">GIACENZE</span></td><td class="dc dl rp ov"><div class="clipc gc"><span class="sq">sa</span><span class="sq">na</span><span class="sq">al</span></div></td><td class="dc rp">2</td><td class="dc rp">30</td><td class="dc rp">14</td><td class="dc rp ov"><div class="clipc kc"><span class="sq">Fornitore F -</span><span class="sq">Alimentari Centr</span></div></td><td></td><td colspan="10"></td></tr>
<tr class="h16"><th>24</th><td></td><td class="th-t th-l"><span class="sq">Stato</span></td><td class="th-t">N. <span class="sq">Prodotti</span></td><td class="th-t">% <span class="sq">Totale</span></td><td colspan="2"></td><td class="dc dl rr ov"><div class="clipc gc"><span class="sq">ca</span><span>00</span><span class="sq">al</span></div></td><td class="dc rr">1</td><td class="dc rr">40</td><td class="dc rr">19</td><td class="dc rr ov"><div class="clipc kc"><span class="sq">Fornitore F -</span><span class="sq">Alimentari Centr</span></div></td><td></td><td colspan="10"></td></tr>
<tr class="h16"><th>25</th><td></td><td class="dc dl st-ok">OK</td><td class="dc st-ok">0</td><td class="dc st-ok">0.00%</td><td colspan="2"></td><td class="dc dl rp ov"><div class="clipc gc"><span class="sq">gr</span><span class="sq">ss</span></div></td><td class="dc rp">2</td><td class="dc rp">20</td><td class="dc rp">8</td><td class="dc rp ov"><div class="clipc kc"><span class="sq">Fornitore F -</span><span class="sq">Alimentari Centr</span></div></td><td></td><td colspan="10"></td></tr>
<tr class="h17"><th>26</th><td></td><td class="dc dl st-at"><span class="sq">ATTENZIONE</span></td><td class="dc st-at">7</td><td class="dc st-at">31.82%</td><td colspan="2"></td><td class="dc dl rr ov"><div class="clipc gc"><span class="sq">ca</span><span class="sq">EV</span><span class="sq">O</span></div></td><td class="dc rr">6</td><td class="dc rr">12</td><td class="dc rr">0</td><td class="dc rr ov"><div class="clipc kc"><span class="sq">Fornitore F -</span><span class="sq">Alimentari Centr</span></div></td><td></td><td colspan="10"></td></tr>
<tr class="h16"><th>27</th><td></td><td class="dc dl st-so"><span class="sq">SOTTO SCORTA</span></td><td class="dc st-so">14</td><td class="dc st-so">63.64%</td><td colspan="2"></td><td class="dc dl rp ov"><div class="clipc gc"><span class="sq">ba</span><span class="sq">sa</span></div></td><td class="dc rp">3</td><td class="dc rp">8</td><td class="dc rp">1</td><td class="dc rp ov"><div class="clipc kc"><span class="sq">Fornitore F -</span><span class="sq">Alimentari Centr</span></div></td><td></td><td colspan="10"></td></tr>
<tr class="h16"><th>28</th><td></td><td class="dc dl st-es"><span class="sq">ESAURITO</span></td><td class="dc st-es">1</td><td class="dc st-es">4.55%</td><td colspan="2"></td><td class="dc dl rr ov"><div class="clipc gc"><span class="sq">mi</span></div></td><td class="dc rr">5</td><td class="dc rr">10</td><td class="dc rr">2</td><td class="dc rr ov"><div class="clipc kc"><span class="sq">Fornitore C -</span><span class="sq">Ortofrutticola</span></div></td><td></td><td colspan="10"></td></tr>
</tbody>
</table>
</div>
<div class="vbar"><div class="vthumb"></div></div>
</div>

<div class="hbar"><div class="hthumb"></div></div>

<div class="tabs d-flex align-items-center">
<div class="tab-nav"><svg viewBox="0 0 60 14" fill="none" stroke="#cfcdca"><path d="M1 2v10M12 2L5 7l7 5zM14 2v10M24 2l-7 5 7 5zM28 2l7 5-7 5zM37 2l7 5-7 5zM46 2v10M49 2l7 5-7 5zM58 2v10"/></svg></div>
<div class="tab-new d-flex align-items-center"><svg viewBox="0 0 18 16" width="16" height="15"><path d="M2 1h8l3 3v11H2z" fill="#fff" stroke="#d5d3d0"/><circle cx="11" cy="9" r="3" fill="#3a7fb8"/><path d="M11 7.500v3M9.500 9h3" stroke="#fff" stroke-width=".8"/></svg></div>
<div class="tab-i">Magazzino</div><div class="tab-i">Movimenti</div><div class="tab-i">Ordini Fornitori</div><div class="tab-i act">Dashboard</div><div class="tab-i">Scheda Prodotto</div><div class="tab-i">Parametri</div><div class="tab-i">Istruzioni</div>
</div>
</div>

<div class="lo-side d-flex flex-column">
<span class="grip"></span>
<svg viewBox="0 0 20 22" fill="none" stroke="#444" stroke-width="1.500"><path d="M3 6h14M3 11h14M3 16h14"/></svg>
<svg viewBox="0 0 20 22"><path d="M2.500 3.500h15v16h-15z" fill="#f4f4f4" stroke="#666"/><path d="M2.500 3.500h15v2h-15z" fill="#444"/><path d="M5 10h10M5 14h10" stroke="#3a7fb8"/><circle cx="12" cy="10" r="1.300" fill="#3a7fb8"/><circle cx="8" cy="14" r="1.300" fill="#3a7fb8"/></svg>
<svg viewBox="0 0 20 22"><text x="1" y="14" font-family="Liberation Sans" font-size="14" fill="#444">A</text><path d="M8 18l2-5 7-8 1.500 1.500-6.500 8z" fill="#9ac6e6" stroke="#3a7fb8"/><path d="M2 18h6" stroke="#444"/></svg>
<svg viewBox="0 0 20 22"><path d="M1.500 6l1-2h5l1 2h9v12h-16z" fill="#fbd89d" stroke="#e8a33d"/><path d="M8 9h10.500v10H8z" fill="#dff0fb" stroke="#666"/><path d="M8.500 18.500l3.500-4 2.500 2 2-2 2 2v2z" fill="#3a9ad9"/></svg>
<svg viewBox="0 0 20 22"><circle cx="10" cy="11" r="7.500" fill="#fff" stroke="#666"/><path d="M15 6l-3 7-7 3 3-7z" fill="#3a8fd0"/></svg>
<svg viewBox="0 0 20 22"><text x="1" y="17" font-family="Liberation Serif" font-style="italic" font-size="17" fill="#3a7fb8">fx</text></svg>
</div>
</div>

<div class="lo-status d-flex align-items-center">
<div class="s-doc"><svg viewBox="0 0 16 16" width="15" height="15" fill="none" stroke="#9a9a9a"><path d="M2 2h10l2 2v10H2zM5 2v4h6V2M4 14V9h8v5"/></svg></div>
<div class="s-sheet s-txt">Sheet 4 of 7</div>
<div class="s-sel s-txt">Selected: 1 row, 12 columns</div>
<div class="s-pg s-txt">PageStyle_Dashboard</div>
<div class="s-lang s-txt">English (USA)</div>
<div class="s-mode d-flex align-items-center"><svg viewBox="0 0 22 12" width="22" height="12" fill="none"><rect x="1" y="2" width="11" height="8" fill="#e6f1fa" stroke="#3a7fb8"/><path d="M15 1h4M15 11h4M17 1v10" stroke="#555"/></svg></div>
<div class="s-sum s-txt">Average: ; Sum: 0</div>
<div class="zm"><svg viewBox="0 0 102 16" width="102" height="16" fill="none" stroke="#555"><path d="M4 8h7" stroke-width="1.300"/><path d="M16 8h65" stroke="#888"/><path d="M85 8h7M88.500 4.500v7" stroke="#444" stroke-width="1.300"/><rect x="47" y="4.500" width="3" height="7" fill="#fff" stroke="#777"/></svg></div>
<div class="s-txt">100%</div>
</div>

</div>
<script src="https://cdn.jsdelivr.net/npm/bootstrap@5.3.0/dist/js/bootstrap.bundle.min.js"></script>
</body>
</html>
